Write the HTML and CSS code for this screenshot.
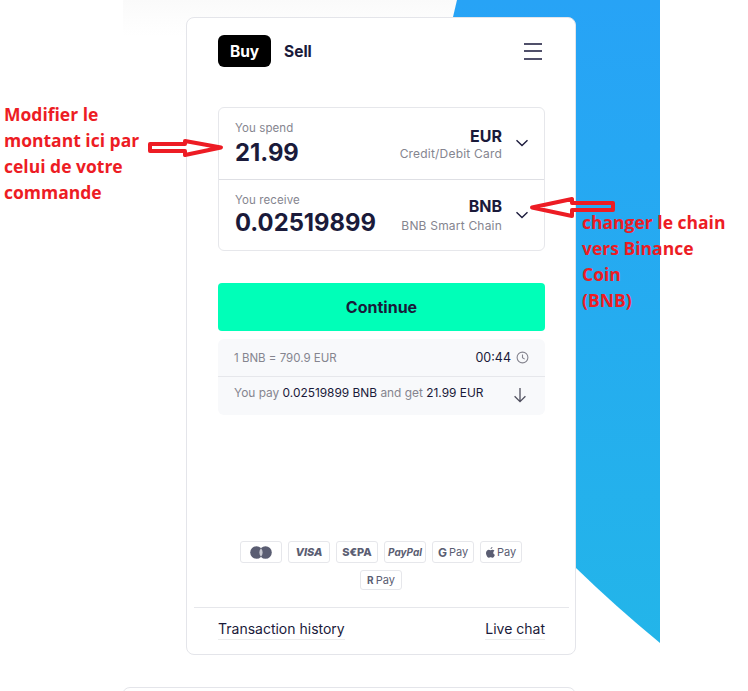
FILE: index.html
```html
<!DOCTYPE html>
<html lang="en">
<head>
<meta charset="utf-8">
<title>Buy and sell crypto</title>
<link rel="stylesheet" href="styles.css">
</head>
<body>
<div class="stage">
  <div class="sheet"></div>
  <svg class="blob" width="210" height="645" viewBox="0 0 210 645" aria-hidden="true">
    <defs>
      <linearGradient id="blobfill" x1="0" y1="0" x2="0" y2="1">
        <stop offset="0" stop-color="#27a3f6"/>
        <stop offset="1" stop-color="#23b5e9"/>
      </linearGradient>
    </defs>
    <path d="M7 0H210V643Q165 606 126 568L3 17Z" fill="url(#blobfill)"/>
  </svg>

  <main class="card">
    <header class="tabs">
      <span class="tab tab-active">Buy</span>
      <span class="tab">Sell</span>
      <span class="burger"><i></i><i></i><i></i></span>
    </header>

    <section class="exchange">
      <div class="row">
        <div class="amount">
          <div class="label">You spend</div>
          <div class="value">21.99</div>
        </div>
        <div class="asset">
          <div class="code">EUR</div>
          <div class="sub">Credit/Debit Card</div>
        </div>
        <svg class="chev" width="14" height="8" viewBox="0 0 14 8"><path d="M1.5 1.2 7 6.600l5.500-5.400" fill="none" stroke="#1d1c3d" stroke-width="1.400"/></svg>
      </div>
      <div class="row row-second">
        <div class="amount">
          <div class="label">You receive</div>
          <div class="value">0.02519899</div>
        </div>
        <div class="asset">
          <div class="code">BNB</div>
          <div class="sub">BNB Smart Chain</div>
        </div>
        <svg class="chev" width="14" height="8" viewBox="0 0 14 8"><path d="M1.5 1.2 7 6.600l5.500-5.400" fill="none" stroke="#1d1c3d" stroke-width="1.400"/></svg>
      </div>
    </section>

    <button class="continue" type="button">Continue</button>

    <section class="quote">
      <div class="quote-top">
        <span class="muted">1 BNB = 790.9 EUR</span>
        <span class="timer">00:44
          <svg width="13" height="13" viewBox="0 0 13 13"><circle cx="6.500" cy="6.500" r="5.400" fill="none" stroke="#85858f" stroke-width="1.100"/><path d="M6.500 3.400v3.400l2.200 1.300" fill="none" stroke="#85858f" stroke-width="1.100"/></svg>
        </span>
      </div>
      <div class="quote-bottom">
        <span class="muted">You pay <b>0.02519899 BNB</b> and get <b>21.99 EUR</b></span>
        <svg class="down" width="14" height="16" viewBox="0 0 14 16"><path d="M7 1v13.500M1.600 9.200 7 14.600l5.400-5.400" fill="none" stroke="#50505f" stroke-width="1.300"/></svg>
      </div>
    </section>

    <section class="pay">
      <span class="badge"><svg width="22" height="13" viewBox="0 0 22 13"><circle cx="6.500" cy="6.500" r="6.300" fill="#5a5d72"/><circle cx="15.500" cy="6.500" r="6.300" fill="#5a5d72"/><path d="M11 2.200c2.200 2.400 2.200 6.200 0 8.600c-2.200-2.400-2.200-6.200 0-8.600Z" fill="#c9cad2"/></svg></span>
      <span class="badge badge-visa">VISA</span>
      <span class="badge badge-sepa">S€PA</span>
      <span class="badge badge-paypal">PayPal</span>
      <span class="badge badge-pay"><b>G</b>Pay</span>
      <span class="badge badge-pay"><svg width="9" height="11" viewBox="0 0 9 11"><path d="M6.400 0c.1.800-.6 1.900-1.800 2C4.500 1.100 5.400.1 6.400 0ZM7.300 5.800c0-1 .6-1.600 1.200-2-.5-.7-1.200-1-1.900-1-.8-.1-1.500.5-2 .5s-1.100-.5-1.900-.5C1.500 2.900 0 4 0 6.100 0 8 1.400 10.800 2.700 10.800c.7 0 1-.5 1.900-.5s1.100.5 1.900.5c1.100 0 2-1.800 2.400-3-.9-.4-1.600-1.100-1.600-2Z" fill="#5a5d72"/></svg>Pay</span>
      <span class="badge badge-pay badge-short"><b class="rupay">R</b>Pay</span>
    </section>

    <footer class="foot">
      <span class="foot-link">Transaction history</span>
      <span class="foot-link">Live chat</span>
    </footer>
  </main>

  <div class="next-card"></div>

  <div class="note note-left">Modifier le<br>montant ici par<br>celui de votre<br>commande</div>
  <div class="note note-right">changer le chain<br>vers Binance<br>Coin<br>(BNB)</div>
  <svg class="arrow arrow-left" width="78" height="22" viewBox="0 0 78 22" aria-hidden="true">
    <path d="M2 7H37V4L73 10.500L37 18V14H2Z" fill="#fff" stroke="#ed1c24" stroke-width="4" stroke-linejoin="round"/>
  </svg>
  <svg class="arrow arrow-right" width="90" height="25" viewBox="0 0 90 25" aria-hidden="true">
    <path d="M4 11.500L44 3V7H85V14H44V20Z" fill="none" stroke="#ed1c24" stroke-width="4" stroke-linejoin="round"/>
  </svg>
</div>
</body>
</html>
```

FILE: styles.css
```css
* { box-sizing: border-box; }
html, body { margin: 0; background: #fff; }
body { font-family: Inter, "Liberation Sans", sans-serif; color: #1a1a3a; }
.stage {
  position: relative;
  width: 748px;
  height: 691px;
  overflow: hidden;
  padding: 17px 0 0 186px;
}
.sheet {
  position: absolute;
  left: 123px;
  top: 0;
  width: 340px;
  height: 36px;
  background: linear-gradient(#fafafa, #fff);
}
.blob { position: absolute; left: 450px; top: 0; }

.card {
  position: relative;
  width: 390px;
  height: 638px;
  background: #fff;
  border: 1px solid #e4e5ea;
  border-radius: 8px;
  padding: 17px 30px 0 31px;
  display: flex;
  flex-direction: column;
}
.tabs { display: flex; align-items: flex-start; height: 32px; }
.tab { font-size: 15.500px; font-weight: 700; line-height: 34px; }
.tab-active {
  width: 53px;
  height: 32px;
  margin-right: 13px;
  text-align: center;
  background: #000;
  color: #fff;
  border-radius: 6px;
}
.burger { align-self: center; margin-left: auto; margin-right: 3px; width: 18px; display: flex; flex-direction: column; gap: 5.500px; }
.burger i { display: block; height: 2px; background: #50506a; }

.exchange {
  margin-top: 40px;
  height: 144px;
  border: 1px solid #e6e7eb;
  border-radius: 6px;
  display: flex;
  flex-direction: column;
}
.row { flex: 0 0 71px; display: flex; align-items: center; padding: 0 15px 0 16px; }
.row-second { flex: 1; border-top: 1px solid #dedfe4; }
.amount { flex: 1; }
.label { font-size: 11.500px; line-height: 14px; color: #85858f; letter-spacing: .1px; }
.value { font-size: 23.800px; font-weight: 700; line-height: 28px; margin-top: 4px; }
.row-second .value { margin-top: 2px; }
.asset { text-align: right; margin-right: 13px; }
.code { font-size: 16px; font-weight: 700; line-height: 20px; }
.sub { font-size: 12px; line-height: 16px; color: #85858f; letter-spacing: .2px; }
.row-second .sub { margin-top: 2px; }
.chev { flex: none; margin-bottom: 2px; }
.row-second .chev { margin-bottom: 0; }

.continue {
  margin-top: 32px;
  height: 48px;
  border: 0;
  border-radius: 4px;
  background: #00ffb8;
  color: #1a1a3a;
  font: 700 16px Inter, "Liberation Sans", sans-serif;
}

.quote { margin-top: 8px; height: 76px; background: #f8f9fb; border-radius: 6px; font-size: 11.500px; }
.quote-top {
  height: 38px;
  padding: 0 16px;
  display: flex;
  align-items: center;
  justify-content: space-between;
  border-bottom: 1px solid #e6e7eb;
}
.quote-bottom { height: 38px; padding: 8px 18px 0 16px; display: flex; align-items: flex-start; justify-content: space-between; font-size: 11.900px; }
.down { margin-top: 2px; }
.muted { color: #85858f; }
.muted b { font-weight: 400; color: #1a1a3a; }
.timer { display: flex; align-items: center; gap: 5px; color: #1a1a3a; font-size: 12.500px; }

.pay {
  margin-top: 126px;
  padding: 0 23px 0 22px;
  display: flex;
  flex-wrap: wrap;
  justify-content: center;
  gap: 7px 6px;
}
.badge {
  width: 42px;
  height: 22px;
  border: 1px solid #e6e7eb;
  border-radius: 3px;
  display: flex;
  align-items: center;
  justify-content: center;
  color: #5a5d72;
  font-size: 11px;
}
.badge-visa { font-weight: 800; font-style: italic; }
.badge-sepa { font-weight: 800; }
.badge-paypal { font-weight: 700; font-style: italic; font-size: 10px; }
.badge-pay { gap: 2px; }
.badge-pay b { font-size: 12px; }
.badge-pay .rupay { font-size: 10px; }
.badge-short { height: 20px; }

.foot {
  margin: auto -24px 0;
  height: 47px;
  padding: 0 24px 4px;
  border-top: 1px solid #e6e7eb;
  display: flex;
  justify-content: space-between;
  align-items: center;
  font-size: 14px;
}
.foot-link { border-bottom: 1px solid #eceded; line-height: 20px; }

.next-card {
  position: absolute;
  left: 122px;
  top: 687px;
  width: 454px;
  height: 20px;
  border: 1px solid #e4e5ea;
  border-radius: 8px;
}

.note {
  position: absolute;
  font-family: "Open Sans", "Liberation Sans", sans-serif;
  font-weight: 700;
  font-size: 17.500px;
  line-height: 26px;
  color: #ed1c24;
  white-space: nowrap;
}
.note-left { left: 4px; top: 101px; }
.note-right { left: 582px; top: 209px; }
.arrow { position: absolute; }
.arrow-left { left: 148px; top: 137px; }
.arrow-right { left: 528px; top: 196px; }
```
